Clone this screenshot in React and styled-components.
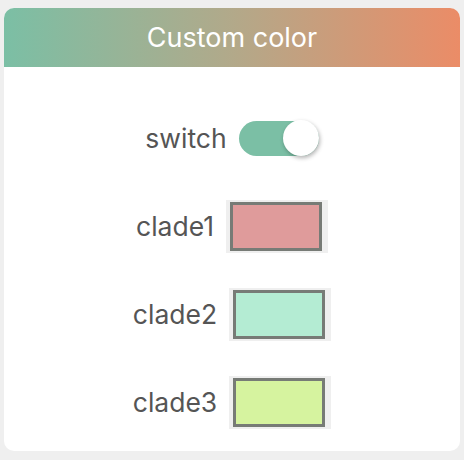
import React, { useState } from 'react';
import styled, { createGlobalStyle } from 'styled-components';

const GlobalStyle = createGlobalStyle`
  body {
    margin: 0;
    background-color: #efefef;
    font-family: Inter, 'Noto Sans', sans-serif;
  }
`;

const Card = styled.div`
  background-color: #fff;
  border-radius: 10px;
  margin: 8px 4px;
  height: 443px;
  overflow: hidden;
  display: flex;
  flex-direction: column;
`;

const Header = styled.div`
  background: linear-gradient(90deg, #7bbfa5 0%, #b2a98a 50%, #eb8c67 100%);
  color: #fff;
  font-size: 27px;
  height: 59px;
  display: flex;
  align-items: center;
  justify-content: center;
`;

const Body = styled.div`
  padding: 27px 0 5px;
  display: flex;
  flex-direction: column;
`;

const Row = styled.div`
  height: 88px;
  display: flex;
  align-items: center;
  justify-content: center;
  gap: 12px;
`;

const Label = styled.span`
  color: #555;
  font-size: 26.5px;
`;

const Track = styled.button`
  appearance: none;
  border: none;
  padding: 0;
  cursor: pointer;
  width: 80px;
  height: 35px;
  border-radius: 18px;
  background-color: ${p => (p.$on ? '#7bbfa5' : '#ccc')};
  display: flex;
  align-items: center;
  justify-content: ${p => (p.$on ? 'flex-end' : 'flex-start')};
`;

const Knob = styled.span`
  width: 36px;
  height: 36px;
  border-radius: 50%;
  background-color: #fff;
  box-shadow: 1px 2px 4px rgba(0, 0, 0, 0.3);
`;

const Swatch = styled.div`
  background-color: #efefef;
  padding: 2px 6px 2px 4px;
  width: 92px;
  height: 49px;
`;

const SwatchFill = styled.div`
  height: 100%;
  box-sizing: border-box;
  border: 3px solid #777b76;
  background-color: ${p => p.$color};
`;

const clades = [
  { name: 'clade1', color: '#df9b9b' },
  { name: 'clade2', color: '#b4ecd3' },
  { name: 'clade3', color: '#d6f39f' },
];

const App = () => {
  const [on, setOn] = useState(true);
  return (
    <>
      <GlobalStyle />
      <Card>
        <Header>Custom color</Header>
        <Body>
          <Row>
            <Label>switch</Label>
            <Track $on={on} onClick={() => setOn(!on)}>
              <Knob />
            </Track>
          </Row>
          {clades.map(clade => (
            <Row key={clade.name}>
              <Label>{clade.name}</Label>
              <Swatch>
                <SwatchFill $color={clade.color} />
              </Swatch>
            </Row>
          ))}
        </Body>
      </Card>
    </>
  );
};

export default App;
